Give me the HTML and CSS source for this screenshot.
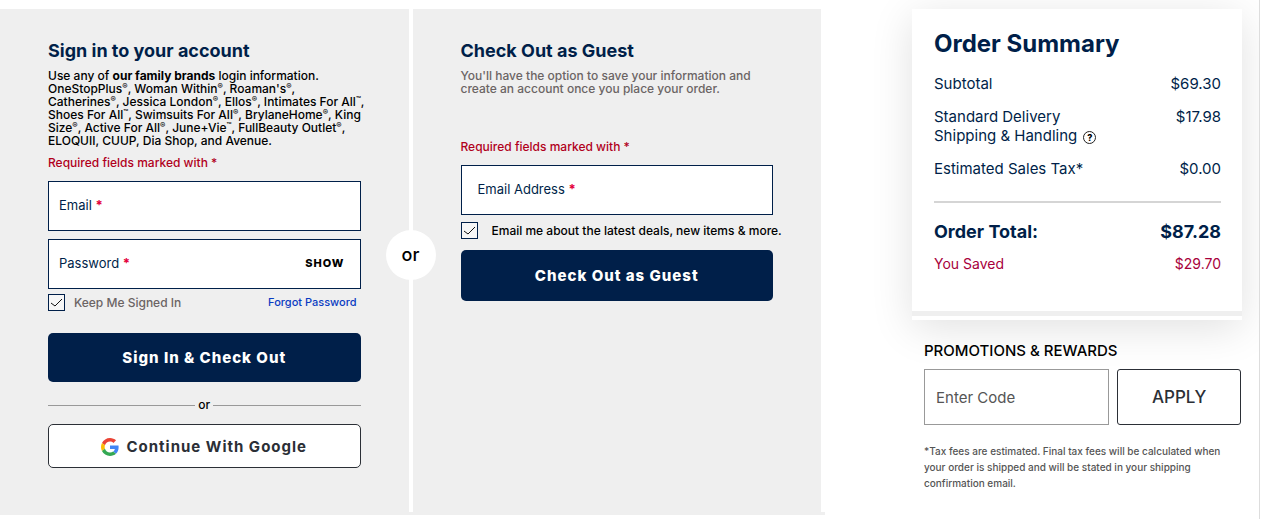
FILE: index.html
```html
<!DOCTYPE html>
<html lang="en">
<head>
    <meta charset="UTF-8">
    <meta name="viewport" content="width=device-width, initial-scale=1.0">
    <title>Checkout</title>
    <link rel="stylesheet" href="styles.css">
</head>
<body>
    <div class="page">
        <main class="checkout">
            <section class="panel">
                <h2>Sign in to your account</h2>
                <p class="brands">Use any of <b>our family brands</b> login information.<br>
                    OneStopPlus<sup>®</sup>, Woman Within<sup>®</sup>, Roaman's<sup>®</sup>,<br>
                    Catherines<sup>®</sup>, Jessica London<sup>®</sup>, Ellos<sup>®</sup>, Intimates For All<sup>™</sup>,<br>
                    Shoes For All<sup>™</sup>, Swimsuits For All<sup>®</sup>, BrylaneHome<sup>®</sup>, King<br>
                    Size<sup>®</sup>, Active For All<sup>®</sup>, June+Vie<sup>™</sup>, FullBeauty Outlet<sup>®</sup>,<br>
                    ELOQUII, CUUP, Dia Shop, and Avenue.</p>
                <p class="required">Required fields marked with *</p>
                <form>
                    <div class="field">
                        <label for="email">Email <span>*</span></label>
                        <input type="email" id="email">
                    </div>
                    <div class="field">
                        <label for="password">Password <span>*</span></label>
                        <input type="password" id="password">
                        <button type="button" class="show">SHOW</button>
                    </div>
                    <div class="check-row">
                        <input type="checkbox" id="keep" checked>
                        <label for="keep">Keep Me Signed In</label>
                        <a href="#">Forgot Password</a>
                    </div>
                    <button type="submit" class="primary signin">Sign In &amp; Check Out</button>
                </form>
                <div class="divider">or</div>
                <button type="button" class="google">
                    <svg width="18" height="18" viewBox="0 0 48 48" aria-hidden="true">
                        <path fill="#ea4335" d="M24 9.5c3.54 0 6.71 1.22 9.21 3.6l6.85-6.85C35.9 2.38 30.47 0 24 0 14.62 0 6.51 5.38 2.56 13.22l7.98 6.19C12.43 13.72 17.74 9.5 24 9.5z"/>
                        <path fill="#4285f4" d="M46.98 24.55c0-1.57-.15-3.09-.38-4.55H24v9.02h12.94c-.58 2.96-2.26 5.48-4.78 7.18l7.73 6c4.51-4.18 7.09-10.36 7.09-17.65z"/>
                        <path fill="#fbbc05" d="M10.53 28.59c-.48-1.45-.76-2.99-.76-4.59s.27-3.14.76-4.59l-7.98-6.19C.92 16.46 0 20.12 0 24c0 3.88.92 7.54 2.56 10.78l7.97-6.19z"/>
                        <path fill="#34a853" d="M24 48c6.48 0 11.93-2.13 15.89-5.81l-7.73-6c-2.15 1.45-4.92 2.3-8.16 2.3-6.26 0-11.57-4.22-13.47-9.91l-7.98 6.19C6.51 42.62 14.62 48 24 48z"/>
                    </svg>
                    Continue With Google
                </button>
            </section>

            <section class="panel guest">
                <span class="or">or</span>
                <h2>Check Out as Guest</h2>
                <p class="note">You'll have the option to save your information and create an account once you place your order.</p>
                <p class="required">Required fields marked with *</p>
                <form>
                    <div class="field">
                        <label for="guest-email">Email Address <span>*</span></label>
                        <input type="email" id="guest-email">
                    </div>
                    <div class="check-row">
                        <input type="checkbox" id="deals" checked>
                        <label for="deals">Email me about the latest deals, new items &amp; more.</label>
                    </div>
                    <button type="submit" class="primary">Check Out as Guest</button>
                </form>
            </section>
        </main>

        <aside class="sidebar">
            <section class="summary">
                <div class="summary-body">
                    <h1>Order Summary</h1>
                    <dl>
                        <div><dt>Subtotal</dt><dd>$69.30</dd></div>
                        <div>
                            <dt>Standard Delivery<br>Shipping &amp; Handling
                                <button type="button" class="help" aria-label="Shipping help">?</button></dt>
                            <dd>$17.98</dd>
                        </div>
                        <div><dt>Estimated Sales Tax*</dt><dd>$0.00</dd></div>
                        <div class="total"><dt>Order Total:</dt><dd>$87.28</dd></div>
                        <div class="saved"><dt>You Saved</dt><dd>$29.70</dd></div>
                    </dl>
                </div>
            </section>

            <section class="promo">
                <h3><label for="code">PROMOTIONS &amp; REWARDS</label></h3>
                <form class="promo-form">
                    <input type="text" id="code" placeholder="Enter Code">
                    <button type="submit">APPLY</button>
                </form>
                <p>*Tax fees are estimated. Final tax fees will be calculated when your order is shipped and will be stated in your shipping confirmation email.</p>
            </section>
        </aside>
    </div>
</body>
</html>
```

FILE: styles.css
```css
* {
    box-sizing: border-box;
}
body {
    font-family: Inter, Arial, sans-serif;
    font-size: 12px;
    margin: 0;
    color: #000;
    background-color: #fff;
}
h1, h2, h3, p, dl, dd {
    margin: 0;
}
button, input {
    font-family: inherit;
    margin: 0;
}
button {
    cursor: pointer;
}
.page {
    display: grid;
    grid-template-columns: minmax(0, 1fr) 436px;
}

/* sign in / guest panels */
.checkout {
    display: grid;
    grid-template-columns: minmax(0, 1fr) minmax(0, 1fr);
    align-self: start;
    margin-top: 9px;
    padding-bottom: 3px;
    background-color: #efefef;
}
.panel {
    position: relative;
    padding: 30px 48px 44px;
    border-right: 4px solid #fff;
}
.panel h2 {
    font-size: 18px;
    line-height: 24px;
    font-weight: 700;
    color: #001f49;
    margin-bottom: 6px;
}
.brands, .note {
    line-height: 13px;
    font-weight: 500;
}
.brands {
    white-space: nowrap;
}
.brands sup {
    font-size: 8px;
    line-height: 0;
    vertical-align: 4px;
}
.note {
    color: #6b6464;
}
.required {
    line-height: 16px;
    font-weight: 500;
    color: #b1001c;
    margin: 8px 0 10px;
}
.guest .required {
    margin-top: 44px;
}
.field {
    display: flex;
    align-items: center;
    height: 50px;
    padding: 0 15px 3px 10px;
    margin-bottom: 8px;
    border: 1px solid #001f49;
    background-color: #fff;
}
.guest .field {
    padding-left: 16px;
    margin-bottom: 7px;
}
.field label {
    font-size: 13px;
    color: #001f49;
    white-space: nowrap;
}
.field label span {
    color: #e4003a;
    font-weight: 700;
}
.field input {
    flex: 1;
    min-width: 0;
    border: none;
    outline: none;
    background: none;
}
.show {
    padding: 0;
    border: none;
    background: none;
    color: #000;
    font-size: 11px;
    font-weight: 800;
    letter-spacing: 1px;
}
.check-row {
    display: flex;
    align-items: center;
    height: 17px;
    margin-bottom: 11px;
    font-weight: 500;
    line-height: 17px;
    white-space: nowrap;
}
.check-row input {
    appearance: none;
    flex: none;
    width: 17px;
    height: 17px;
    margin-right: 9px;
    border: 1px solid #001f49;
    background-color: #f6f6f6;
}
.check-row input:checked {
    background-image: url("data:image/svg+xml,%3Csvg xmlns='http://www.w3.org/2000/svg' viewBox='0 0 15 15'%3E%3Cpath d='M2 8l4 3 7-7' fill='none' stroke='%23111'/%3E%3C/svg%3E");
}
.guest .check-row input {
    margin-right: 14px;
}
.field + .check-row {
    margin-top: -3px;
}
.guest .field + .check-row {
    margin-top: 0;
}
.check-row label {
    color: #6b6464;
}
.guest .check-row label {
    color: #000;
}
.check-row a {
    margin-left: auto;
    margin-right: 4px;
    color: #0a3cc2;
    font-size: 11px;
    text-decoration: none;
}
.primary {
    display: block;
    width: 100%;
    height: 51px;
    border: none;
    border-radius: 5px;
    background-color: #001f49;
    color: #fff;
    font-size: 15px;
    font-weight: 800;
    letter-spacing: 1px;
}
.signin {
    height: 49px;
    margin-top: 22px;
}
.divider {
    display: flex;
    align-items: center;
    gap: 3px;
    line-height: 16px;
    margin: 15px 0 11px;
    font-weight: 500;
}
.divider::before, .divider::after {
    content: "";
    flex: 1;
    border-top: 1px solid #999;
}
.google {
    display: flex;
    align-items: center;
    justify-content: center;
    gap: 7px;
    width: 100%;
    height: 44px;
    padding-top: 3px;
    border: 1px solid #2b2f36;
    border-radius: 5px;
    background-color: #fff;
    color: #2b2f36;
    font-size: 15px;
    line-height: 18px;
    font-weight: 700;
    letter-spacing: 1px;
}
.or {
    position: absolute;
    top: 221px;
    left: -27px;
    width: 50px;
    height: 50px;
    border-radius: 50%;
    background-color: #fff;
    font-size: 18px;
    line-height: 50px;
    font-weight: 500;
    text-align: center;
}

/* order summary */
.sidebar {
    min-height: 100vh;
    margin-right: 1px;
    padding: 9px 17px 0 87px;
    border-right: 1px solid #ddd;
    overflow: hidden;
}
.summary {
    padding-bottom: 4px;
    background-color: #fff;
    box-shadow: 0 8px 40px rgba(0, 0, 0, 0.12);
}
.summary-body {
    padding: 19px 21px 38px 22px;
    border-bottom: 5px solid #efefef;
    color: #001f49;
}
.summary h1 {
    font-size: 24px;
    line-height: 32px;
    font-weight: 700;
    margin-bottom: 14px;
}
.summary dl div {
    display: flex;
    justify-content: space-between;
    font-size: 15px;
    line-height: 19px;
    margin-bottom: 14px;
}
.help {
    width: 13px;
    height: 13px;
    margin-left: 2px;
    padding: 0;
    border: 1px solid #222;
    border-radius: 50%;
    background-color: #fff;
    color: #000;
    font-size: 9px;
    line-height: 11px;
    font-weight: 800;
}
.summary dl .total {
    padding-top: 18px;
    margin-top: 23px;
    margin-bottom: 11px;
    border-top: 2px solid #d5d5d5;
    font-size: 18px;
    line-height: 22px;
    font-weight: 700;
}
.summary dl .saved {
    margin-bottom: 0;
    color: #a8003b;
    font-size: 14px;
}

/* promo code */
.promo {
    padding: 21px 1px 0 12px;
}
.promo h3 {
    font-size: 15px;
    line-height: 20px;
    font-weight: 500;
    margin-bottom: 8px;
}
.promo-form {
    display: grid;
    grid-template-columns: 3fr 2fr;
    gap: 8px;
}
.promo-form input, .promo-form button {
    width: 100%;
    height: 56px;
    background-color: #fff;
}
.promo-form input {
    padding: 0 11px;
    border: 1px solid #999;
    font-size: 15px;
}
.promo-form input::placeholder {
    color: #555;
    opacity: 1;
}
.promo-form button {
    border: 1px solid #2b2f36;
    border-radius: 3px;
    color: #2b2f36;
    font-size: 17px;
    font-weight: 500;
}
.promo p {
    margin-top: 18px;
    color: #555;
    font-size: 10px;
    line-height: 16px;
    font-weight: 500;
}
```
